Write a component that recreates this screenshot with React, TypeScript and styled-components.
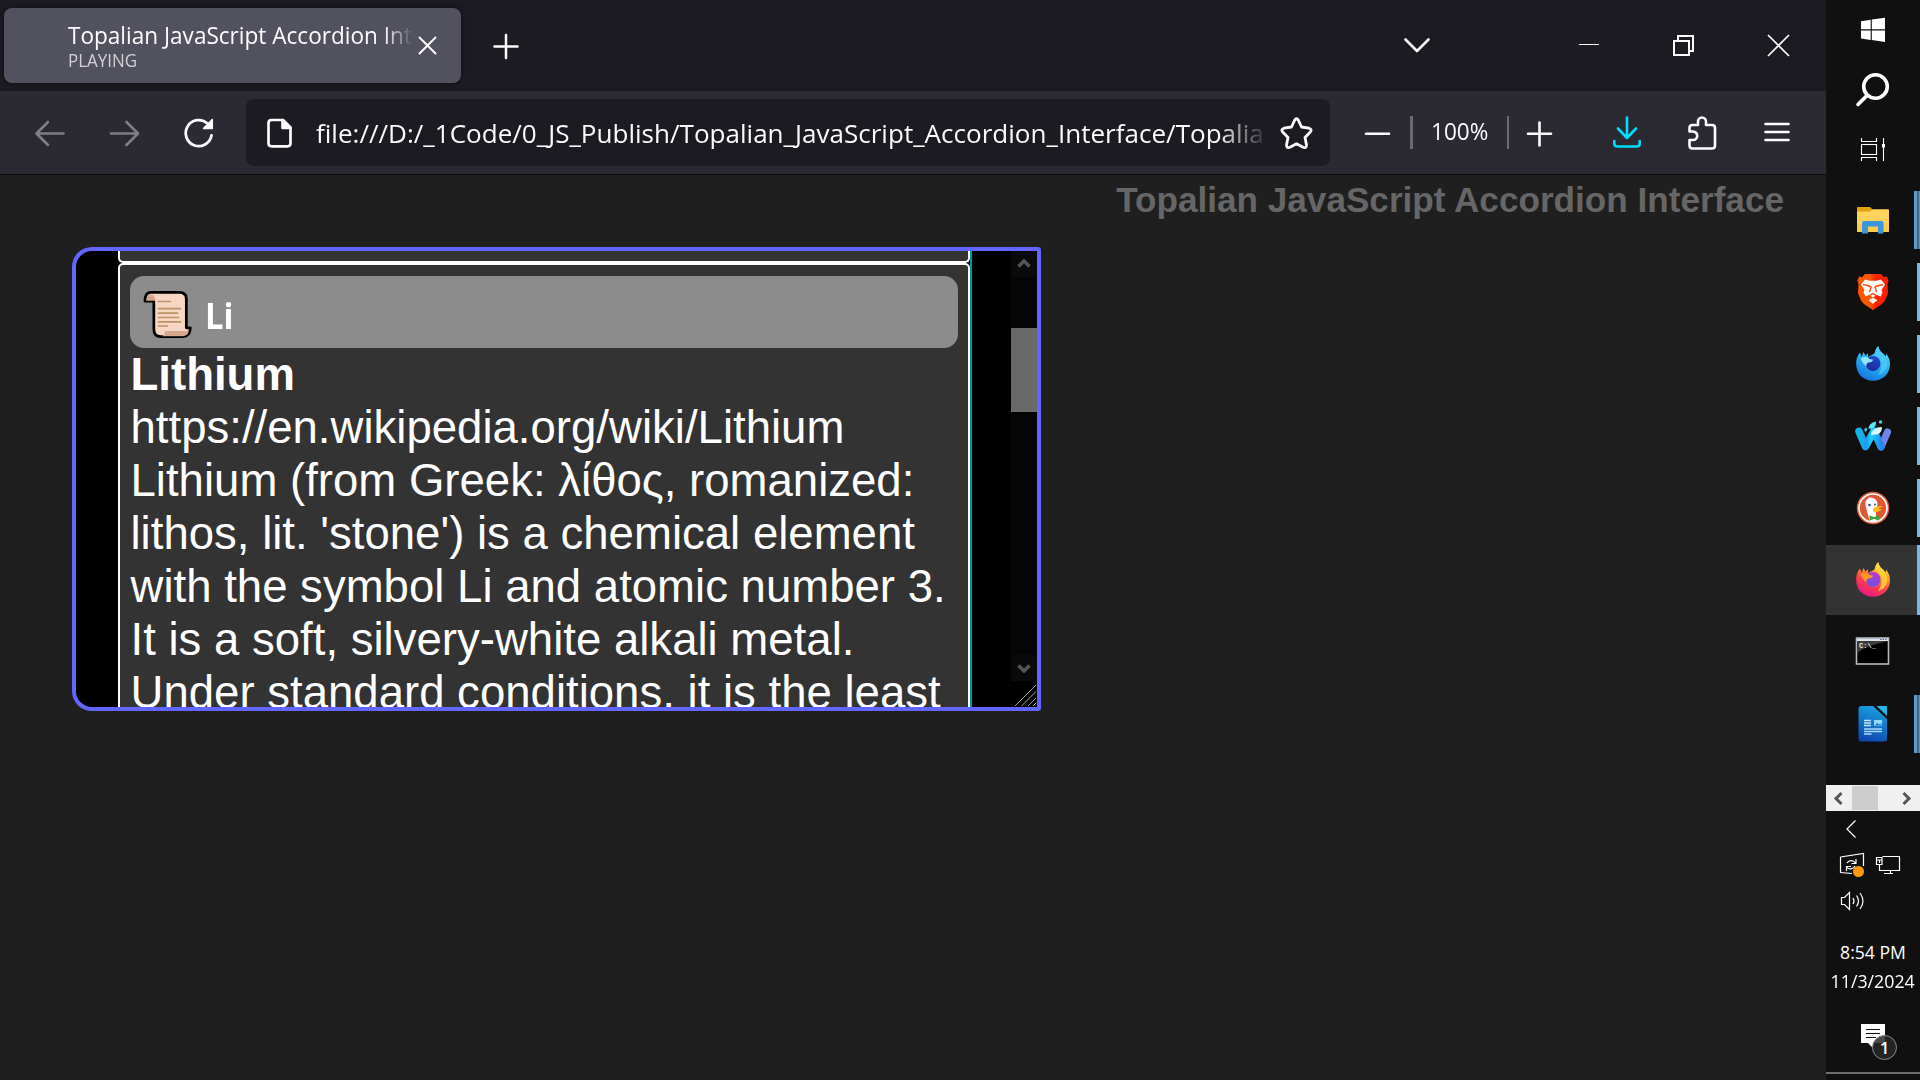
import React from "react";
import styled, { createGlobalStyle } from "styled-components";

const uiFont = `"Segoe UI", "Open Sans", "Noto Sans", sans-serif`;
const pageFont = `Arial, "Liberation Sans", sans-serif`;

const GlobalStyle = createGlobalStyle`
  * { box-sizing: border-box; }
  body { margin: 0; background: #101010; overflow: hidden; }
  svg { display: block; flex: none; }
`;

const Desktop = styled.div`
  display: flex;
  width: 1920px;
  height: 1080px;
  overflow: hidden;
  font-family: ${uiFont};
  color: #fbfbfe;
`;

const Browser = styled.main`
  display: flex;
  flex-direction: column;
  width: 1826px;
  background: #1f1f1f;
`;

/* Squeezes a run of text horizontally without changing its height. */
const Fit = styled.span<{ $x: number; $origin?: string }>`
  display: inline-block;
  white-space: nowrap;
  transform: scaleX(${(p) => p.$x});
  transform-origin: ${(p) => p.$origin ?? "left"} center;
`;

/* ---------- tab strip ---------- */

const TabStrip = styled.header`
  display: flex;
  align-items: center;
  height: 91px;
  padding-left: 4px;
  background: #1c1b22;
`;

const Tab = styled.div`
  display: flex;
  width: 457px;
  height: 75px;
  padding-left: 64px;
  border-radius: 8px;
  background: #52525e;
  box-shadow: 0 0 5px rgba(0, 0, 0, 0.6);
`;

const TabLabel = styled.div`
  width: 345px;
  padding-top: 10px;
  overflow: hidden;
`;

const TabTitle = styled.div`
  height: 34px;
  overflow: hidden;
  font-size: 23.4px;
  line-height: 34px;
  white-space: nowrap;
  mask-image: linear-gradient(to right, #000 315px, transparent 345px);
`;

const TabStatus = styled.div`
  height: 24px;
  margin-top: -4px;
  font-size: 17.6px;
  line-height: 24px;
  color: #d0d0d6;
`;

const IconButton = styled.button<{ $w: number; $ml?: number; $mr?: number; $dim?: boolean }>`
  display: flex;
  flex: none;
  align-items: center;
  justify-content: center;
  width: ${(p) => p.$w}px;
  height: 67px;
  margin: 0 ${(p) => p.$mr ?? 0}px 0 ${(p) => p.$ml ?? 0}px;
  padding: 0;
  border: 0;
  background: none;
  color: ${(p) => (p.$dim ? "#7f7e86" : "#fbfbfe")};
`;

const Spacer = styled.div`
  flex: 1;
`;

/* ---------- toolbar ---------- */

const Toolbar = styled.nav`
  display: flex;
  align-items: center;
  height: 84px;
  padding-left: 12px;
  border-bottom: 1px solid #0c0c0d;
  background: #2b2a33;
`;

const UrlBar = styled.div`
  display: flex;
  align-items: center;
  width: 1084px;
  height: 67px;
  margin-left: 10px;
  border-radius: 8px;
  background: #1c1b22;
`;

const UrlText = styled.div`
  width: 950px;
  padding-left: 3px;
  overflow: hidden;
  font-size: 26px;
  line-height: 40px;
  white-space: nowrap;
  mask-image: linear-gradient(to right, #000 904px, transparent 956px);
`;

const Divider = styled.i<{ $w: number }>`
  width: ${(p) => p.$w}px;
  height: 33px;
  background: #6b6a73;
`;

const ZoomLevel = styled.div`
  width: 94px;
  padding: 0 1px 3px 0;
  font-size: 23.4px;
  line-height: 32px;
  text-align: center;
`;

/* ---------- page ---------- */

const Page = styled.section`
  flex: 1;
  padding: 3px 42px 0 72px;
  font-family: ${pageFont};
`;

const Heading = styled.h1`
  height: 69px;
  margin: 0;
  font-size: 35.15px;
  line-height: 43px;
  text-align: right;
  color: #666;
`;

const Panel = styled.div`
  display: flex;
  width: 969px;
  height: 464px;
  padding-left: 42px;
  overflow: hidden;
  border: 4px solid #6464ff;
  border-radius: 20px 3px 3px 20px;
  background: #000;
`;

const CardList = styled.div`
  width: 854px;
  border-right: 2px solid #0097a7;
  overflow: hidden;
`;

const Card = styled.article<{ $h: number; $open?: boolean }>`
  height: ${(p) => p.$h}px;
  padding: ${(p) => (p.$open ? "11px 10px" : "0")};
  border: 2px solid #fff;
  border-top-width: ${(p) => (p.$open ? 2 : 0)}px;
  border-radius: ${(p) => (p.$open ? "5px" : "0 0 5px 5px")};
  background: #333;
`;

const CardHeader = styled.div`
  display: flex;
  align-items: center;
  height: 72px;
  padding: 5px 0 0 13px;
  border-radius: 14px;
  background: #8c8c8c;
  font: 700 36px/50px ${uiFont};
  color: #fff;
`;

const CardName = styled.span`
  margin-left: 12px;
  padding-top: 3px;
`;

const CardBody = styled.div`
  padding-left: 0.5px;
  font-size: 45.55px;
  line-height: 53px;
  color: #fff;
  white-space: nowrap;
`;

const ScrollTrack = styled.div`
  display: flex;
  flex-direction: column;
  width: 26px;
  margin-left: 39px;
  background: #050507;
`;

const ScrollButton = styled.div`
  height: 26px;
  background: #0a0a0c;
`;

const ScrollThumb = styled.div`
  height: 84px;
  margin-top: 51px;
  background: #696969;
`;

const ResizeCorner = styled.div`
  height: 26px;
  background: #000;
`;

/* ---------- task bar ---------- */

const TaskBar = styled.aside`
  display: flex;
  flex-direction: column;
  width: 94px;
  background: #101010;
`;

const AppRow = styled.div<{ $active?: boolean }>`
  display: flex;
  align-items: center;
  height: 72px;
  background: linear-gradient(${(p) => (p.$active ? "#333" : "#101010")} 0 0) center / 100% 70px no-repeat;
`;

const Indicator = styled.i<{ $kind?: "one" | "many" | "active" }>`
  flex: none;
  width: ${(p) => (p.$kind === "many" ? 6 : 3)}px;
  height: ${(p) => (p.$kind === "active" ? 70 : 58)}px;
  margin-left: ${(p) => (p.$kind === "many" ? -6 : -3)}px;
  background: ${(p) =>
    p.$kind === "many"
      ? "linear-gradient(to right, #6299c8 3px, #41678a 3px 5px, #6299c8 5px)"
      : p.$kind
      ? "#76b9ed"
      : "none"};
`;

const TrayScroll = styled.div`
  display: flex;
  align-items: center;
  height: 26px;
  margin-top: 25px;
  background: #f0f0f0;
`;

const TrayThumb = styled.div`
  width: 26px;
  height: 24px;
  background: #cdcdcd;
`;

const Clock = styled.div`
  display: flex;
  flex-direction: column;
  align-items: center;
  height: 64px;
  margin-top: 18px;
  font-size: 17.6px;
  line-height: 29px;
  color: #fff;
`;

const Notice = styled.div`
  position: relative;
  height: 63px;
`;

const Badge = styled.span`
  position: absolute;
  left: 46px;
  top: 26px;
  width: 25px;
  height: 25px;
  border: 1px solid #8a8a8a;
  border-radius: 50%;
  background: rgba(40, 40, 40, 0.85);
  font-size: 17px;
  font-weight: 600;
  line-height: 23px;
  text-align: center;
`;

const ShowDesktop = styled.div`
  height: 2px;
  background: #6e6e6e;
`;

type GlyphProps = { children: React.ReactNode; size?: number; sw?: number };

/* Line icon whose origin is the centre of the button. */
function Glyph({ children, size = 40, sw = 2.6 }: GlyphProps) {
  return (
    <svg
      width={size}
      height={size}
      viewBox={`${-size / 2} ${-size / 2} ${size} ${size}`}
      fill="none"
      stroke="currentColor"
      strokeWidth={sw}
      strokeLinecap="round"
      strokeLinejoin="round"
    >
      {children}
    </svg>
  );
}

function TaskIcon({ h = 72, children }: { h?: number; children: React.ReactNode }) {
  return (
    <svg width="94" height={h} viewBox={`-47 ${-h / 2} 94 ${h}`} fill="none">
      {children}
    </svg>
  );
}

function ScrollEmoji() {
  return (
    <svg width="50" height="50" viewBox="0 0 50 50" strokeLinejoin="round">
      <path
        d="M8 3h29c4 0 7 2 7 7v29h4c0 6-3 9-8 9H18c-5 0-7-3-7-8V12H2C2 6 4 3 8 3Z"
        fill="#f7d7c4"
        stroke="#000"
        strokeWidth="2.8"
        transform="translate(0 -.6) scale(.985)"
      />
      <path d="M3.400 10.800c0-4 1.400-6.200 4.400-6.400 3 .2 4.600 2.800 4.600 6.400Z" fill="#d3a88d" />
      <path d="M22 41h23.800c-.5 3.400-2.800 5.200-6 5.200H18.500c2.500-.7 3.500-2.600 3.500-5.200Z" fill="#d3a88d" />
      <path d="M15.500 11.500h12M15.500 18.700h22M15.500 23.200h19M15.500 27.500h20M15.500 31.800h22M15.500 36h9" stroke="#bd9468" strokeWidth="1.700" strokeLinecap="round" />
    </svg>
  );
}

function FolderIcon() {
  return (
    <TaskIcon>
      <path d="M-16-12q0-1 1-1H-3l2 2v4h-15Z" fill="#e5a00d" />
      <path d="M-16-8.500H-3l2.500-2.300H15q1 0 1 1V11q0 1-1 1h-30q-1 0-1-1Z" fill="#ffd35c" />
      <path d="M-16 4H16v7q0 1-1 1h-30q-1 0-1-1Z" fill="#f9c83f" opacity=".6" />
      <path d="M-11 13.500V3q0-2 2-2H8.500q2 0 2 2v10.500H5V6.500H-5v7Z" fill="#3a96dd" />
    </TaskIcon>
  );
}

function BraveIcon() {
  return (
    <TaskIcon>
      <defs>
        <linearGradient id="brave">
          <stop offset=".4" stopColor="#ff5500" />
          <stop offset=".6" stopColor="#ff2000" />
        </linearGradient>
      </defs>
      <path d="M-8-18H8l3 3.200 3-.6 1.500 4L14.500-8 15 1 12 8.500Q10 12 5 14.800L0 18-5 14.800Q-10 12-12 8.500L-15 1l.5-9-1-3.400 1.500-4 3 .6Z" fill="url(#brave)" />
      <path d="M-8-12.500l4.500 1.300h7l4.500-1.300L12-7.500 8.500-2l1 2.500-2 4L3.500 2.800 1.500 4.500 0 5.500-1.500 4.500-3.500 2.800-7.500 4.500l-2-4 1-2.500L-12-7.500Z" fill="#fff" />
      <path d="M-10-7.500l6 1.500 2 1-1.500 5M10-7.500l-6 1.500-2 1 1.500 5M-3 3.200L0 1.500l3 1.700" stroke="#ff4a10" strokeWidth="1.500" />
      <path d="M0 5.800l4.500 2.500L0 11.800-4.500 8.300Z" fill="#fff" />
    </TaskIcon>
  );
}

type FoxProps = { id: string; stops: string[]; globe: string[]; flame: string; snout: string };

function FoxIcon({ id, stops, globe, flame, snout }: FoxProps) {
  return (
    <TaskIcon>
      <defs>
        <linearGradient id={`${id}b`} x1=".8" y1="0" x2=".3" y2="1">
          {stops.map((c, i) => (
            <stop key={c} offset={i / (stops.length - 1)} stopColor={c} />
          ))}
        </linearGradient>
        <linearGradient id={`${id}g`} x1=".7" y1="0" x2=".4" y2="1">
          <stop stopColor={globe[0]} />
          <stop offset="1" stopColor={globe[1]} />
        </linearGradient>
      </defs>
      <path d="M-16.800 0Q-17-7-13-11.500l1.600 4L-9.500-12-7.500-8.500-5-10.800-4.800-7 1.500-10.500Q2-15 5.300-18 6-13 10-10.500l3 3v-3Q17-5.500 17 0C17 10 9.500 16.800 0 16.800S-16.800 10-16.800 0Z" fill={`url(#${id}b)`} />
      <path d="M1.500-10.500Q2-15 5.300-18 6-13 10-10.500 15-5 14 2 12 9 5 11 11 3 7-6Z" fill={flame} opacity=".85" />
      <circle cx="0" cy="-.5" r="7.400" fill={`url(#${id}g)`} />
      <path d="M-12.500-5.500Q-7-9-3.500-5l4 .8Q-1-1.500-4.500-1.500-7-1-6.600 2.500-11-1-12.500-5.500Z" fill={snout} />
    </TaskIcon>
  );
}

function WaterfoxIcon() {
  return (
    <TaskIcon>
      <defs>
        <linearGradient id="wf" x1="0" x2="1">
          <stop stopColor="#12b5e8" />
          <stop offset=".35" stopColor="#1e9df0" />
          <stop offset=".55" stopColor="#19d3f5" />
          <stop offset="1" stopColor="#2a86ee" />
        </linearGradient>
      </defs>
      <path d="M8 11L14.500-4" stroke="#6f86e6" strokeWidth="7" strokeLinecap="round" />
      <path d="M-14-4.500L-7.500 10.500 1-5 8 10.500" stroke="url(#wf)" strokeWidth="7.500" strokeLinecap="round" strokeLinejoin="round" />
      <path d="M-2-1Q-1-9 9-9 9-3 4-1.500Z" fill="#d7f8ff" />
      <path d="M-4.500-7.500Q-4-13 3-14.500 3.500-9-1-7.500Q-3-7-4.500-7.500Z" fill="#5fe3f3" />
      <circle cx="7.500" cy="-14" r="1.700" fill="#3fd3ef" />
      <path d="M-9-6.500l2-2.300 1.500 2.800L-7.500-4Z" fill="#2bc4ee" />
    </TaskIcon>
  );
}

function DuckIcon() {
  return (
    <TaskIcon>
      <circle r="16.300" fill="#de5833" />
      <circle r="14" stroke="#fff" strokeWidth="1.600" />
      <path d="M-3 13.500Q-6 4-7.500-3-8-9-4-9.500L-5-10.500Q2-11 4-6.500 5-3 3.500 1 2 4 4 13Q0 14.500-3 13.500Z" fill="#fff" />
      <path d="M1.500-.5Q5-2.500 10-2 7 0 5 .5L9 1.500Q5 5 .5 3.500-1 1 1.500-.5Z" fill="#fdb813" />
      <circle cx="-3.500" cy="-3" r="1.300" fill="#2d4f8e" />
      <circle cx="2" cy="-3.500" r="1" fill="#2d4f8e" />
      <path d="M-3.500 7.500L1 9l5-1.500v5L1 11l-4.500 1.500Z" fill="#3fa544" />
    </TaskIcon>
  );
}

function TerminalIcon() {
  return (
    <TaskIcon>
      <rect x="-16.500" y="-14" width="32" height="26" fill="#000" stroke="#b4b9c0" strokeWidth="1.600" />
      <path d="M-16-13.500H15v2.500H-16Z" fill="#dfe3ea" />
      <path d="M7-12.500h1.500m1 0h1.500m1 0h1.500" stroke="#4a67a8" strokeWidth="1.200" />
      <path d="M-15.500-11H15Q2-8-4-5.500-13-3-15.500 2Z" fill="#3d3d3d" />
      <text x="-14" y="-4" fill="#e8e8e8" fontFamily="Liberation Mono, monospace" fontWeight="700" fontSize="7" textLength="17">
        C:\_
      </text>
    </TaskIcon>
  );
}

function WriterIcon() {
  return (
    <TaskIcon>
      <defs>
        <linearGradient id="lo" x1=".6" y1="0" x2=".3" y2="1">
          <stop stopColor="#1aa0e0" />
          <stop offset="1" stopColor="#0d47b0" />
        </linearGradient>
      </defs>
      <path d="M-11.500-18H0L14-5V14.500q0 3-3 3h-22.500q-3 0-3-3V-15q0-3 3-3Z" fill="url(#lo)" />
      <path d="M3.500-18H14v10Z" fill="#25b6ee" />
      <path d="M-9-3.500h7M-9-1h7M-9 1.500h7" stroke="#bfe6fa" strokeWidth="1.300" />
      <path d="M-9 5H9M-9 7.500H9M-9 10h7.500" stroke="#a9d8f7" strokeWidth="1.300" />
      <rect x="1" y="-4" width="8" height="6" fill="#8fdcf5" />
      <path d="M1.500 1.500L4-1l2 1.500 1.500-1L9 1.500Z" fill="#1572c8" />
    </TaskIcon>
  );
}

const apps: { icon: React.ReactNode; kind?: "one" | "many" | "active" }[] = [
  { icon: <FolderIcon />, kind: "many" },
  { icon: <BraveIcon />, kind: "one" },
  {
    icon: <FoxIcon id="dev" stops={["#5fe0fb", "#24b1f5", "#1573dc"]} globe={["#1d4cc4", "#24269c"]} flame="#4cc9f6" snout="#8fe6ff" />,
    kind: "one",
  },
  { icon: <WaterfoxIcon />, kind: "one" },
  { icon: <DuckIcon />, kind: "one" },
  {
    icon: <FoxIcon id="fx" stops={["#fff44f", "#ff9a26", "#ff3b4f", "#e31587"]} globe={["#b833e1", "#6a56d8"]} flame="#ffd53a" snout="#ff9a1c" />,
    kind: "active",
  },
  { icon: <TerminalIcon /> },
  { icon: <WriterIcon />, kind: "many" },
];

const lithiumText = [
  "https://en.wikipedia.org/wiki/Lithium",
  "Lithium (from Greek: λίθος, romanized:",
  "lithos, lit. 'stone') is a chemical element",
  "with the symbol Li and atomic number 3.",
  "It is a soft, silvery-white alkali metal.",
  "Under standard conditions, it is the least",
];

export default function App() {
  return (
    <>
      <GlobalStyle />
      <Desktop>
        <Browser>
          <TabStrip>
            <Tab>
              <TabLabel>
                <TabTitle>
                  <Fit $x={0.965}>Topalian JavaScript Accordion Interface</Fit>
                </TabTitle>
                <TabStatus>
                  <Fit $x={0.965}>PLAYING</Fit>
                </TabStatus>
              </TabLabel>
              <IconButton $w={28}>
                <Glyph sw={2}>
                  <path d="M-8-6.500L8 9.500M8-6.500L-8 9.500" transform="translate(.5 2)" />
                </Glyph>
              </IconButton>
            </Tab>
            <IconButton $w={89}>
              <Glyph sw={2.5}>
                <path d="M-11.500 .5h23M0-11v23" />
              </Glyph>
            </IconButton>
            <Spacer />
            <IconButton $w={60} $mr={94}>
              <Glyph>
                <path d="M-11.500-6.500L0 5 11.500-6.500" />
              </Glyph>
            </IconButton>
            <IconButton $w={95}>
              <Glyph sw={1}>
                <path d="M-10-1.500h20" strokeLinecap="butt" />
              </Glyph>
            </IconButton>
            <IconButton $w={95}>
              <Glyph sw={2}>
                <path d="M-10-5H5V9h-15ZM-6-6v-4h15v15h-4" strokeLinejoin="miter" strokeLinecap="butt" />
              </Glyph>
            </IconButton>
            <IconButton $w={95}>
              <Glyph sw={1.700}>
                <path d="M-11-11l21 21M10-11l-21 21" strokeLinecap="butt" />
              </Glyph>
            </IconButton>
          </TabStrip>

          <Toolbar>
            <IconButton $w={75} $dim>
              <Glyph>
                <path d="M13.500.5h-27M-2-11L-13.500.5-2 12" />
              </Glyph>
            </IconButton>
            <IconButton $w={75} $dim>
              <Glyph>
                <path d="M-14 .5h27M1.500-11L13 .5 1.500 12" />
              </Glyph>
            </IconButton>
            <IconButton $w={74}>
              <Glyph sw={2.800}>
                <path d="M12.500 2.500A13 13 0 1 1 8.500-9.500" />
                <path d="M13.300-13.500v9H4.500Z" fill="currentColor" strokeWidth="1.500" />
              </Glyph>
            </IconButton>
            <UrlBar>
              <IconButton $w={67}>
                <Glyph sw={2.700}>
                  <path d="M-8.500-13H3L10.500-5.500V10.300q0 3-3 3H-8.500q-3 0-3-3V-10q0-3 3-3Z" />
                  <path d="M2.500-13L10.500-5h-8Z" fill="currentColor" />
                </Glyph>
              </IconButton>
              <UrlText>
                <Fit $x={1.002}>
                  file:///D:/_1Code/0_JS_Publish/Topalian_JavaScript_Accordion_Interface/Topalian
                </Fit>
              </UrlText>
              <IconButton $w={67}>
                <Glyph sw={2.800}>
                  <path
                    transform="translate(-.5 0)"
                    d="M-2-12.500Q0-16 2-12.500L5-6 12.500-4.800Q16-3.500 13.800-1L8.500 4.500 10 12Q10 15.500 6.500 14.300L0 10.800-6.500 14.300Q-10 15.500-10 12L-8.500 4.500-13.800-1Q-16-3.500-12.500-4.800L-5-6Z"
                  />
                </Glyph>
              </IconButton>
            </UrlBar>
            <IconButton $w={64} $ml={16}>
              <Glyph>
                <path d="M-12 .7h23" />
              </Glyph>
            </IconButton>
            <Divider $w={3} />
            <ZoomLevel>
              <Fit $x={0.965} $origin="center">
                100%
              </Fit>
            </ZoomLevel>
            <Divider $w={2} />
            <IconButton $w={61}>
              <Glyph>
                <path d="M-12 .7h23M-.5-10.500v23" />
              </Glyph>
            </IconButton>
            <IconButton $w={75} $ml={19}>
              <Glyph>
                <g stroke="#00ddff">
                  <path d="M0-15.500V5M-9-4.500L0 5 9-4.500M-12.700 8v2.500q0 3 3 3H9.700q3 0 3-3V8" />
                </g>
              </Glyph>
            </IconButton>
            <IconButton $w={75}>
              <Glyph>
                <path d="M-12.500-1.500V-5q0-3 3-3H-4v-3.500a4 4 0 0 1 8 0V-8h6q3 0 3 3V12.500q0 3-3 3H-9.500q-3 0-3-3V7h3.500a4.250 4.250 0 0 0 0-8.500Z" />
              </Glyph>
            </IconButton>
            <IconButton $w={75}>
              <Glyph>
                <path d="M-11.500-9h23M-11.500-1h23M-11.500 7h23" />
              </Glyph>
            </IconButton>
          </Toolbar>

          <Page>
            <Heading>Topalian JavaScript Accordion Interface</Heading>
            <Panel>
              <CardList>
                <Card $h={12} />
                <Card $h={900} $open>
                  <CardHeader>
                    <ScrollEmoji />
                    <CardName>
                      <Fit $x={0.91}>Li</Fit>
                    </CardName>
                  </CardHeader>
                  <CardBody>
                    <b>Lithium</b>
                    {lithiumText.map((line) => (
                      <div key={line}>{line}</div>
                    ))}
                  </CardBody>
                </Card>
              </CardList>
              <ScrollTrack>
                <ScrollButton>
                  <svg width="26" height="26">
                    <path d="M7.500 15.500L13 10l5.500 5.500" fill="none" stroke="#555" strokeWidth="3.500" />
                  </svg>
                </ScrollButton>
                <ScrollThumb />
                <Spacer />
                <ScrollButton>
                  <svg width="26" height="26">
                    <path d="M7.500 10.500L13 16l5.500-5.500" fill="none" stroke="#555" strokeWidth="3.500" />
                  </svg>
                </ScrollButton>
                <ResizeCorner>
                  <svg width="26" height="26">
                    <path d="M4 25L25 4M10.500 25L25 10.500M17 25l8-8M22 25l3-3" stroke="#a5a5a5" strokeWidth="1" />
                  </svg>
                </ResizeCorner>
              </ScrollTrack>
            </Panel>
          </Page>
        </Browser>

        <TaskBar>
          <TaskIcon h={60}>
            <path d="M-12-8.800l9.700-1.400v9.400H-12ZM-1.200-10.400L12-12.300V-.8H-1.200ZM-12 .4h9.700v9.500L-12 8.600ZM-1.200.4H12v11.500l-13.200-1.800Z" fill="#fff" />
          </TaskIcon>
          <TaskIcon h={60}>
            <circle cx="2.500" cy="-3.500" r="11.800" stroke="#fff" strokeWidth="3.600" />
            <path d="M-6 5.500l-9 9" stroke="#fff" strokeWidth="3.600" strokeLinecap="round" />
          </TaskIcon>
          <TaskIcon h={64}>
            <g stroke="#fff" strokeWidth="1.100">
              <rect x="-11.500" y="-7.500" width="15" height="10" />
              <path d="M-11.500-14v3.500h15V-14M-11.500 9V5.500h15V9M10.500-14v23" />
            </g>
            <rect x="9" y="-8" width="3" height="3.500" fill="#fff" />
          </TaskIcon>
          {apps.map((app, i) => (
            <AppRow key={i} $active={app.kind === "active"}>
              {app.icon}
              <Indicator $kind={app.kind} />
            </AppRow>
          ))}
          <TrayScroll>
            <svg width="26" height="26">
              <path d="M15.500 8.500L10 14l5.500 5.500" transform="translate(0 -.5)" fill="none" stroke="#555" strokeWidth="3" />
            </svg>
            <TrayThumb />
            <Spacer />
            <svg width="26" height="26">
              <path d="M9.500 8.500L15 14l-5.500 5.500" transform="translate(0 -.5)" fill="none" stroke="#555" strokeWidth="3" />
            </svg>
          </TrayScroll>
          <svg width="94" height="109" viewBox="1826 811 94 109" fill="none" stroke="#fff" strokeWidth="1.200">
            <path d="M1855.500 820.500L1847 829l8.500 8.500" />
            <path d="M1840.500 857l23-3.500V866M1852 873.500l-11.500-1V857" />
            <path d="M1847 863a5 5 0 0 1 8.500 0m.5-4v4.500h-4.500M1855 866a5 5 0 0 1-8.500 1m0 4v-4.500h4.500" />
            <circle cx="1858.500" cy="871.500" r="5.500" fill="#ff9a0a" stroke="none" />
            <path d="M1882.500 856.500h17v14h-20v-6M1890.500 870.500v3M1884 873.500h9M1876.500 857.500h5.500v7h-5.500ZM1876.500 860h5.500M1879.500 860v3" />
            <path d="M1841.500 897.500h3l5-5v17l-5-5h-3ZM1853 898q2 3 0 6M1856.500 895.500q4 5.500 0 11M1860 893q6 8 0 16" />
          </svg>
          <Clock>
            <Fit $x={1} $origin="center">8:54 PM</Fit>
            <Fit $x={1.01} $origin="center">11/3/2024</Fit>
          </Clock>
          <Spacer />
          <Notice>
            <svg width="94" height="50">
              <path d="M35 19h24v19H47v5l-5-5h-7Z" transform="translate(0 -4)" fill="#fff" />
              <path d="M40 20.500h14M40 24.500h14M40 28.500h10" stroke="#101010" strokeWidth="1.200" />
            </svg>
            <Badge>1</Badge>
          </Notice>
          <ShowDesktop />
          <svg width="94" height="6" />
        </TaskBar>
      </Desktop>
    </>
  );
}
